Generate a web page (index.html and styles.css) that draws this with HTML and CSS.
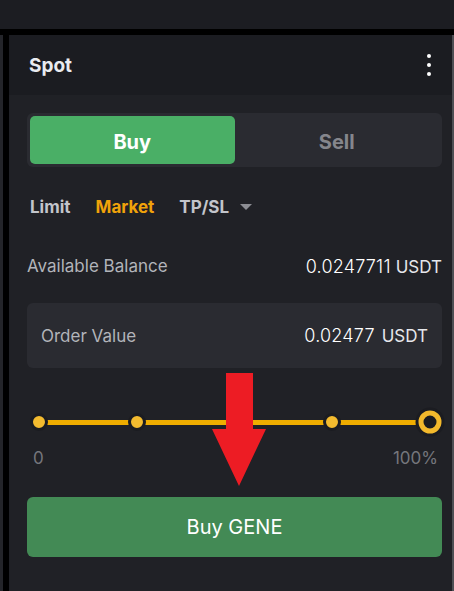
FILE: index.html
```html
<!DOCTYPE html>
<html>
<head>
<meta charset="utf-8">
<link rel="stylesheet" href="styles.css">
</head>
<body>
<div class="topbar"></div>
<div class="frame">
  <div class="edge"></div>
  <div class="panel">
    <div class="header">
      <span class="title">Spot</span>
      <span class="menu"><i></i><i></i><i></i></span>
    </div>
    <div class="body">
      <div class="toggle">
        <div class="opt active">Buy</div>
        <div class="opt">Sell</div>
      </div>
      <div class="tabs">
        <span class="tab">Limit</span>
        <span class="tab current">Market</span>
        <span class="tab">TP/SL<span class="caret"></span></span>
      </div>
      <div class="row balance">
        <span class="label">Available Balance</span>
        <span class="value">0.0247711<span class="unit">USDT</span></span>
      </div>
      <div class="row box">
        <span class="label">Order Value</span>
        <span class="value">0.02477<span class="unit wide">USDT</span></span>
      </div>
      <div class="slider">
        <div class="track">
          <span class="dot" style="left:0%"></span>
          <span class="dot" style="left:25%"></span>
          <span class="dot" style="left:50%"></span>
          <span class="dot" style="left:75%"></span>
          <span class="thumb" style="left:100%"></span>
        </div>
      </div>
      <div class="scale"><span>0</span><span>100%</span></div>
      <button class="submit">Buy GENE</button>
      <svg class="arrow" width="54" height="113" viewBox="0 0 54 113">
        <polygon points="14,0 41,0 41,56 54,56 27,113 0,56 14,56" fill="#ed1c24"/>
      </svg>
    </div>
  </div>
  <div class="rightedge"></div>
</div>
</body>
</html>
```
FILE: styles.css
```css
html, body {
  margin: 0;
  padding: 0;
}
body {
  width: 454px;
  height: 591px;
  overflow: hidden;
  background: #1c1d22;
  font-family: Inter, "Noto Sans", sans-serif;
  display: flex;
  flex-direction: column;
}
.topbar {
  height: 29px;
  background: #1c1d22;
  flex: none;
}
.frame {
  flex: 1;
  display: flex;
  border-top: 6px solid #000;
}
.edge {
  width: 3px;
  background: #24252a;
  border-right: 6px solid #000;
  flex: none;
}
.rightedge {
  width: 2px;
  background: #4e4f54;
  flex: none;
}
.panel {
  flex: 1;
  display: flex;
  flex-direction: column;
  background: #202126;
}
.header {
  height: 60px;
  background: #1b1c21;
  display: flex;
  align-items: center;
  justify-content: space-between;
  padding: 0 20px;
  flex: none;
}
.title {
  color: #e9ebf0;
  font-weight: 700;
  font-size: 19px;
}
.menu {
  display: flex;
  flex-direction: column;
  gap: 5px;
  margin-right: 1px;
}
.menu i {
  display: block;
  width: 4px;
  height: 4px;
  border-radius: 50%;
  background: #fff;
}
.body {
  position: relative;
  flex: 1;
  padding: 18px 10px 0 18px;
  display: flex;
  flex-direction: column;
}
.toggle {
  height: 54px;
  box-sizing: border-box;
  padding: 3px;
  border-radius: 6px;
  background: #2a2b31;
  display: flex;
}
.opt {
  flex: 1;
  display: flex;
  align-items: center;
  justify-content: center;
  padding-top: 3px;
  font-size: 20px;
  font-weight: 700;
  color: #85868c;
  border-radius: 5px;
}
.opt.active {
  background: #4aaf66;
  color: #fff;
}
.tabs {
  margin-top: 28px;
  height: 24px;
  display: flex;
  align-items: center;
  gap: 25px;
  padding-left: 3px;
  font-size: 17px;
  font-weight: 700;
  color: #c3c5cb;
}
.tab.current {
  color: #f0a30a;
}
.caret {
  display: inline-block;
  margin-left: 11px;
  vertical-align: middle;
  width: 0;
  height: 0;
  border-left: 6px solid transparent;
  border-right: 6px solid transparent;
  border-top: 6px solid #8c8d93;
  position: relative;
  top: -1px;
}
.row {
  display: flex;
  align-items: center;
  justify-content: space-between;
  font-size: 17px;
}
.label {
  color: #b2b4ba;
}
.value {
  color: #fff;
  font-size: 18px;
  font-weight: 300;
  letter-spacing: 0.2px;
}
.unit {
  color: #e6e7eb;
  font-size: 17px;
  font-weight: 400;
  letter-spacing: 0;
  margin-left: 5px;
}
.unit.wide {
  margin-left: 7px;
}
.balance {
  margin-top: 35px;
  height: 24px;
}
.box {
  margin-top: 25px;
  height: 65px;
  box-sizing: border-box;
  padding: 0 14px;
  border-radius: 6px;
  background: #2a2b31;
}
.slider {
  margin-top: 39px;
  height: 30px;
  padding: 0 12px;
  display: flex;
  align-items: center;
}
.track {
  position: relative;
  flex: 1;
  height: 5px;
  background: #efad00;
}
.dot {
  position: absolute;
  top: 50%;
  width: 12px;
  height: 12px;
  border-radius: 50%;
  background: #f3bb2f;
  border: 3px solid #1b1c21;
  transform: translate(-50%, -50%);
}
.thumb {
  position: absolute;
  top: 50%;
  width: 13px;
  height: 13px;
  border-radius: 50%;
  background: #1b1c21;
  border: 5px solid #f3b92c;
  box-shadow: 0 0 0 3px #1b1c21;
  transform: translate(-50%, -50%);
}
.scale {
  margin-top: 11px;
  height: 20px;
  display: flex;
  justify-content: space-between;
  padding: 0 4px 0 6px;
  font-size: 17px;
  color: #75767c;
  line-height: 20px;
}
.submit {
  margin-top: 29px;
  height: 60px;
  border: 0;
  border-radius: 6px;
  background: #438a55;
  color: #fff;
  font-family: Inter, "Noto Sans", sans-serif;
  font-size: 20px;
  font-weight: 400;
}
.arrow {
  position: absolute;
  left: 203px;
  top: 278px;
}
```
